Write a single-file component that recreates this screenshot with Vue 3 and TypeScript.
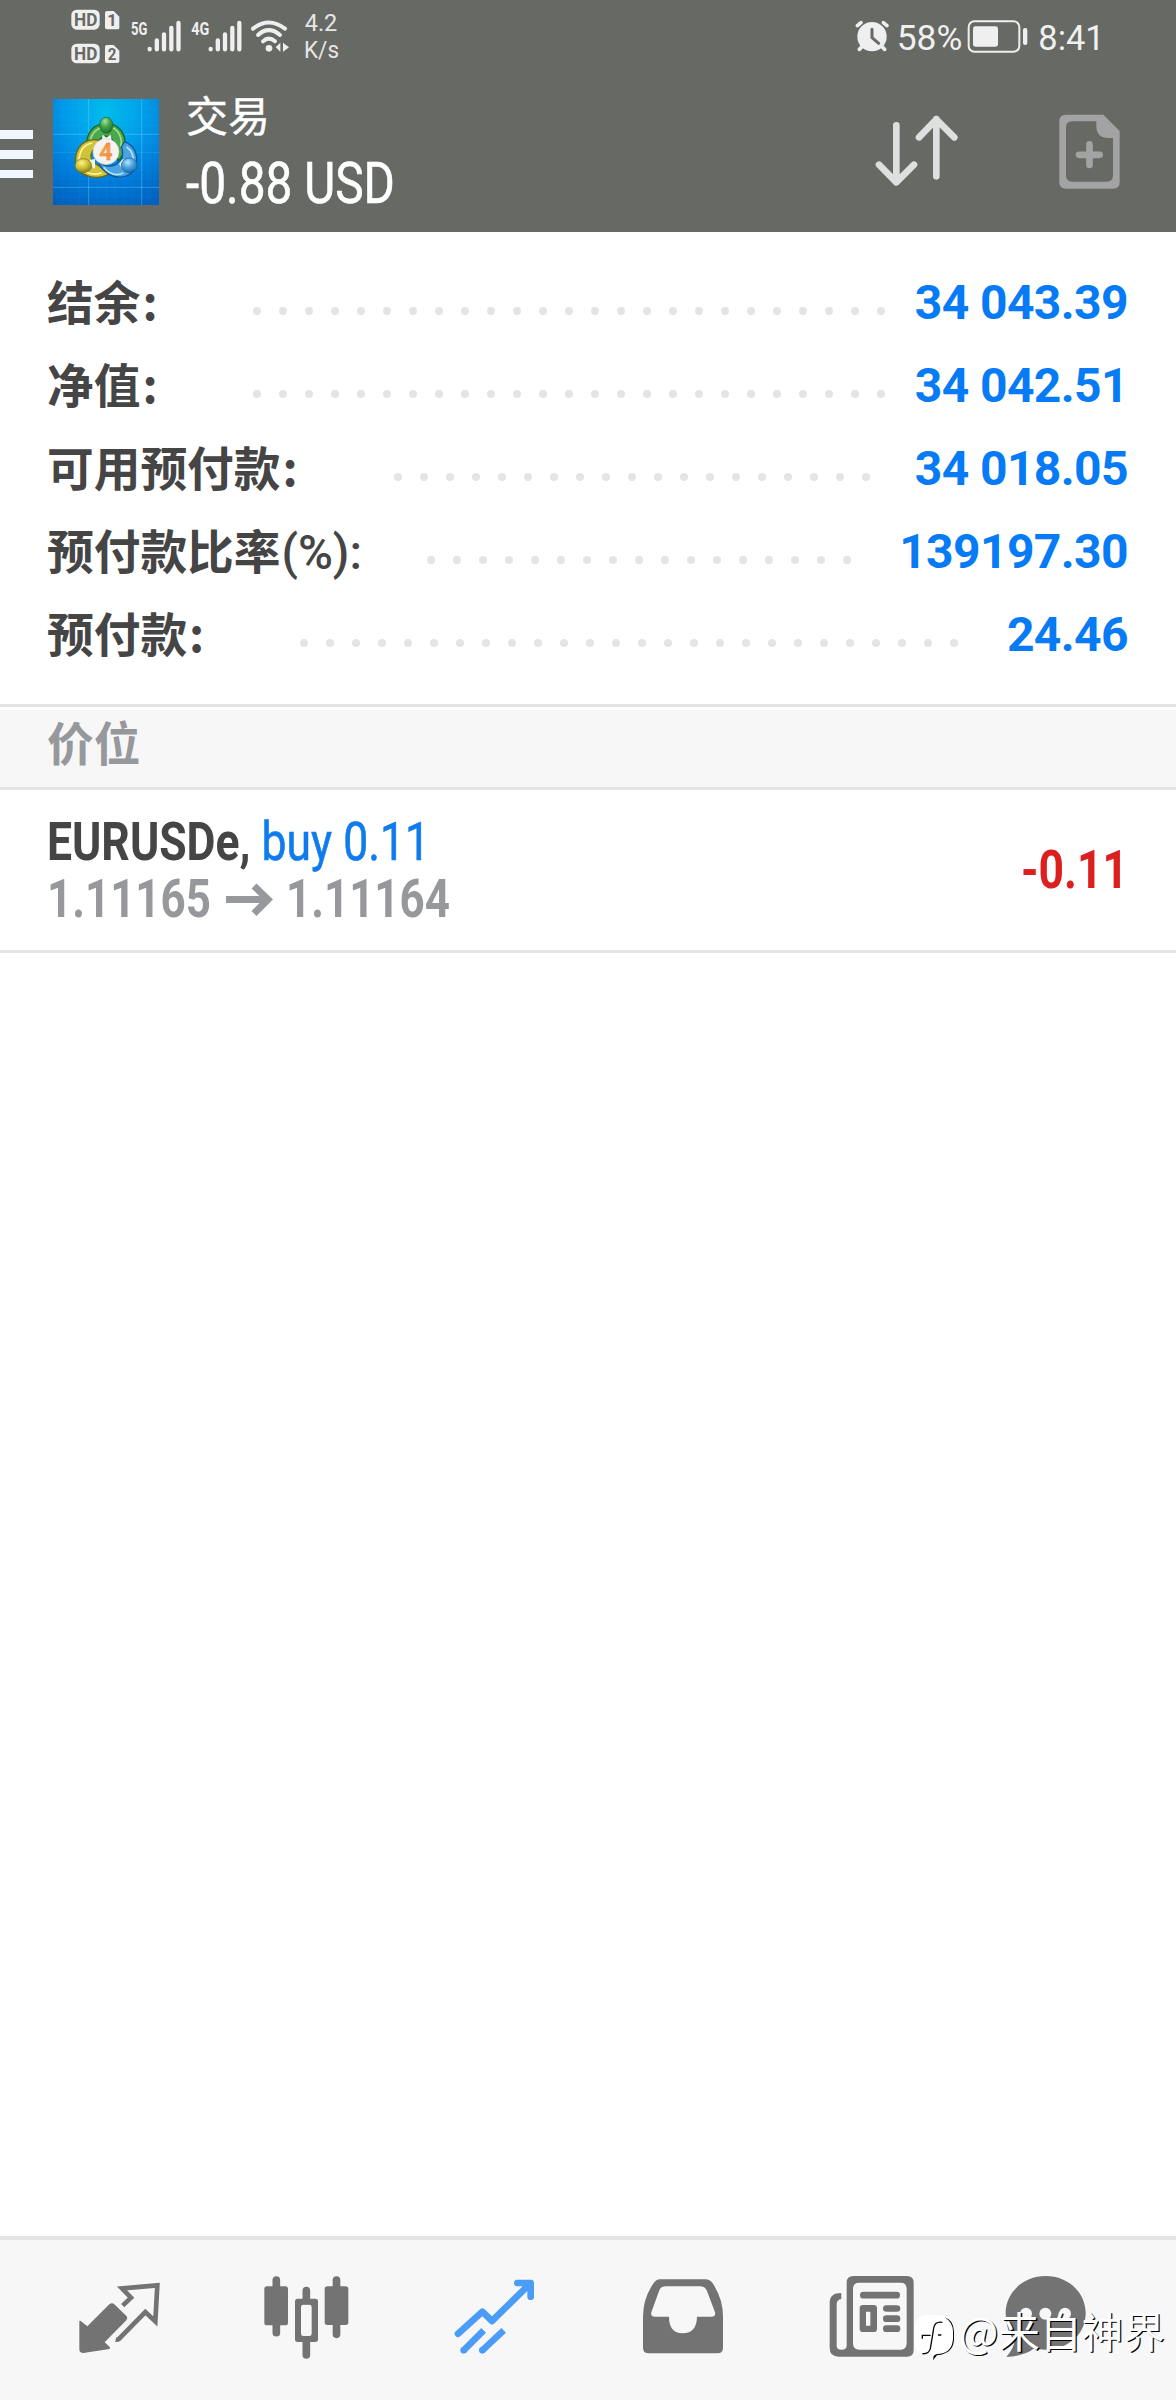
<script setup lang="ts">
interface SummaryRow {
  label: string
  suffix: string
  latin?: boolean
  value: string
  labelWidth: number
  dots: number
}

const rows: SummaryRow[] = [
  { label: '结余', suffix: ':', value: '34 043.39', labelWidth: 205.5, dots: 25 },
  { label: '净值', suffix: ':', value: '34 042.51', labelWidth: 205.5, dots: 25 },
  { label: '可用预付款', suffix: ':', value: '34 018.05', labelWidth: 347, dots: 19 },
  { label: '预付款比率', suffix: '(%):', latin: true, value: '139197.30', labelWidth: 380, dots: 17 },
  { label: '预付款', suffix: ':', value: '24.46', labelWidth: 253, dots: 26 },
]
</script>

<template>
  <div class="screen">
    <header class="header">
      <div class="status">
        <svg class="status-left" width="400" height="72" viewBox="0 0 1200 216">
          <g fill="#efefef">
            <rect x="214" y="29" width="85" height="60" rx="16" />
            <rect x="214" y="131" width="85" height="59" rx="16" />
            <path d="M321 33h20l17 17v33q0 5-6 5h-31q-6 0-6-6V39q0-6 6-6z" />
            <path d="M321 135h20l17 17v32q0 5-6 5h-31q-6 0-6-6v-42q0-6 6-6z" />
          </g>
          <g class="bold" fill="#676965" font-size="54">
            <text x="222" y="78" textLength="70" lengthAdjust="spacingAndGlyphs">HD</text>
            <text x="222" y="180" textLength="70" lengthAdjust="spacingAndGlyphs">HD</text>
            <text x="322" y="79" font-size="50">1</text>
            <text x="323" y="180" font-size="48" textLength="26" lengthAdjust="spacingAndGlyphs">2</text>
          </g>
          <g class="bold" fill="#efefef" font-size="57">
            <text x="393" y="104" textLength="49" lengthAdjust="spacingAndGlyphs">5G</text>
            <text x="574" y="105" textLength="54" lengthAdjust="spacingAndGlyphs">4G</text>
          </g>
          <g stroke="#efefef" stroke-width="13" stroke-linecap="round">
            <path d="M449 147v1M470.500 121v27M492 103v45M514 84v64M535.500 69v79" />
            <path d="M632 147v1M653.500 121v27M675 103v45M697 84v64M718 69v79" />
          </g>
          <g fill="none" stroke="#efefef" stroke-width="12" stroke-linecap="round">
            <path d="M759 86Q806 49 855 86" />
            <path d="M774 105Q806 76 840 105" />
            <path d="M789 124Q806 108 825 124" />
          </g>
          <circle cx="807" cy="145" r="10" fill="#efefef" />
          <path d="M841 128v27l-14-13zM849 128v27l18-13z" fill="#efefef" />
          <g class="regular" fill="#e6e6e6" font-size="70">
            <text x="914" y="94" textLength="98" lengthAdjust="spacingAndGlyphs">4.2</text>
            <text x="912" y="174" textLength="105" lengthAdjust="spacingAndGlyphs">K/s</text>
          </g>
        </svg>
        <svg class="status-right" width="356" height="72" viewBox="0 0 1068 216">
          <circle cx="156" cy="110" r="44" fill="#efefef" />
          <path d="M112 77l11-9M201 77l-11-9M125 141l-7 7M187 141l7 7" stroke="#efefef" stroke-width="11" stroke-linecap="round" />
          <path d="M156 88v25l20 17" fill="none" stroke="#676965" stroke-width="9" stroke-linecap="round" />
          <g class="regular" fill="#f0f0f0" font-size="104">
            <text x="230" y="150" textLength="197" lengthAdjust="spacingAndGlyphs">58%</text>
            <text x="655" y="150" textLength="199" lengthAdjust="spacingAndGlyphs">8:41</text>
          </g>
          <rect x="446" y="64" width="152" height="91" rx="17" fill="none" stroke="#efefef" stroke-width="6" />
          <rect x="459" y="79" width="75" height="61" rx="7" fill="#efefef" />
          <rect x="609" y="84" width="13" height="51" rx="6" fill="#efefef" />
        </svg>
      </div>
      <div class="toolbar">
        <svg class="burger" width="33" height="50" viewBox="0 0 33 50">
          <path d="M0 0h33v9H0zM0 20h33v9H0zM0 40h33v8H0z" fill="#f0f7ff" />
        </svg>
        <svg class="logo" width="106" height="106" viewBox="39 27 318 318">
          <defs>
            <radialGradient id="sky" cx=".5" cy=".12" r=".95">
              <stop offset="0" stop-color="#00bdec" />
              <stop offset=".35" stop-color="#00a0eb" />
              <stop offset=".7" stop-color="#007bd9" />
              <stop offset="1" stop-color="#0062c0" />
            </radialGradient>
            <radialGradient id="green" cx=".4" cy=".25" r=".8">
              <stop offset="0" stop-color="#a5e295" /><stop offset=".45" stop-color="#43a447" /><stop offset="1" stop-color="#176d2c" />
            </radialGradient>
            <radialGradient id="yellow" cx=".4" cy=".3" r=".8">
              <stop offset="0" stop-color="#fff28a" /><stop offset=".5" stop-color="#c9bd32" /><stop offset="1" stop-color="#786f18" />
            </radialGradient>
            <radialGradient id="blue" cx=".4" cy=".3" r=".8">
              <stop offset="0" stop-color="#b5e6ff" /><stop offset=".45" stop-color="#4ba2dd" /><stop offset="1" stop-color="#125b9f" />
            </radialGradient>
          </defs>
          <rect x="39" y="27" width="318" height="318" fill="url(#sky)" />
          <path d="M66 27v318M92 27v318M119 27v318M172 27v318M199 27v318M225 27v318M252 27v318M278 27v318M330 27v318M39 54h318M39 80h318M39 107h318M39 160h318M39 213h318M39 240h318M39 266h318M39 319h318" stroke="#8de0ff" stroke-opacity=".08" stroke-width="2" />
          <path d="M146 27v318M305 27v318M39 133h318M39 292h318" stroke="#9be4ff" stroke-opacity=".32" stroke-width="3" />
          <path d="M39 187h318" stroke="#9be4ff" stroke-opacity=".15" stroke-width="3" />
          <g stroke-linejoin="round" stroke-width="4">
            <path d="M140 171C136 129 161 101 199 101C237 101 259 132 255 170C252 190 245 205 234 212L218 151Q200 126 177 151z" fill="#48a84b" stroke="#176328" />
            <path d="M150 157C154 128 173 112 195 112M214 112C237 120 248 145 242 170" fill="none" stroke="#a3db8c" stroke-width="5" />
            <path d="M108 234C101 187 117 152 162 149Q177 148 182 160L157 183Q144 207 168 222L209 250Q185 267 150 260Q124 253 108 234z" fill="#cfc33a" stroke="#6b671a" />
            <path d="M117 211C119 181 133 163 157 159M131 242Q154 258 186 249" fill="none" stroke="#fff49a" stroke-width="5" />
            <path d="M254 155C283 167 294 190 289 225C280 255 249 268 218 258C192 247 178 229 177 216Q200 236 227 224L246 207Q251 184 244 171z" fill="#4ba4df" stroke="#0f579a" />
            <path d="M260 171Q283 188 280 218M191 232Q217 264 250 249" fill="none" stroke="#b0e4ff" stroke-width="5" />
          </g>
          <path d="M188 134l11 9 13-9 3 18h-30zM149 210l16-3v29l-19-10zM237 222l11-15 10 7-11 23z" fill="#f4f6ed" />
          <ellipse cx="199" cy="106" rx="20" ry="24" fill="url(#green)" stroke="#17662b" stroke-width="2" />
          <ellipse cx="130" cy="227" rx="25" ry="21" fill="url(#yellow)" stroke="#756d20" stroke-width="2" />
          <ellipse cx="268" cy="226" rx="24" ry="22" fill="url(#blue)" stroke="#14599a" stroke-width="2" />
          <circle cx="198" cy="185" r="39" fill="#f5f2f0" stroke="#c9cdcd" stroke-width="2" />
          <text class="bold" x="178" y="210" font-size="72" fill="#f6a04d" stroke="#d97a2b" stroke-width="1" textLength="40" lengthAdjust="spacingAndGlyphs">4</text>
        </svg>
        <svg class="account" width="300" height="130" viewBox="0 0 300 130">
          <text class="cjk title" x="-1" y="41.500" font-size="42">交易</text>
          <text class="regular" x="-1" y="113" font-size="56.500" fill="#fff" stroke="#fff" stroke-width=".6" textLength="209" lengthAdjust="spacingAndGlyphs">-0.88 USD</text>
        </svg>
        <svg class="actions" width="356" height="145" viewBox="0 261 1068 435">
          <path d="M229 376v171M177 494l52 53 53-53M349 529V357M297 412l52-54 54 54" fill="none" stroke="#dfdfdf" stroke-width="20" stroke-linecap="round" stroke-linejoin="round" />
          <path fill-rule="evenodd" d="M738 344H850L899 393V547Q899 566 879 566H738Q718 566 718 547V364Q718 344 738 344zM757 364Q738 364 738 383V526Q738 545 757 545H861Q879 545 879 526V414H861Q829 411 829 381V364z" fill="#a3a3a3" />
          <path d="M777 464.500h62M808.500 433v62" stroke="#a3a3a3" stroke-width="20" stroke-linecap="round" />
        </svg>
      </div>
    </header>

    <section class="summary">
      <div v-for="row in rows" :key="row.value" class="row">
        <div class="label" :style="{ width: row.labelWidth + 'px' }">{{ row.label }}<span :class="row.latin ? 'latin' : 'colon'">{{ row.suffix }}</span></div>
        <div class="leader"><i v-for="n in row.dots" :key="n" /></div>
        <div class="value">{{ row.value }}</div>
      </div>
    </section>

    <div class="section-title">价位</div>

    <section class="position">
      <svg width="520" height="160" viewBox="0 0 520 160">
        <text x="-1" y="70" font-size="53.500" textLength="383" lengthAdjust="spacingAndGlyphs"><tspan class="bold" fill="#454545">EURUSDe, </tspan><tspan class="regular" fill="#0f7bee" stroke="#0f7bee" stroke-width=".6">buy 0.11</tspan></text>
        <g class="bold" fill="#97989c" font-size="53.500">
          <text x="-1" y="127" textLength="164" lengthAdjust="spacingAndGlyphs">1.11165</text>
          <text x="238" y="127" textLength="164" lengthAdjust="spacingAndGlyphs">1.11164</text>
        </g>
        <path d="M178 109.500h43M206 96l14 13.500-14 14" fill="none" stroke="#97989c" stroke-width="7" />
      </svg>
      <svg width="110" height="160" viewBox="0 0 110 160">
        <text class="bold" x="3" y="98" font-size="53.500" fill="#dc2020" textLength="107" lengthAdjust="spacingAndGlyphs">-0.11</text>
      </svg>
    </section>

    <main class="blank"></main>

    <nav class="nav">
      <svg viewBox="-48 60 564 480">
        <path d="M118 303q3-2 7 2l17 14 66-66q8-7 15 0l37 36q5 6-1 12l-65 66 15 14q4 6-5 7l-74 11q-12 0-12-12z" fill="#737373" />
        <path d="M248 257l25-24-27-28 106-9-6 108-30-28-79 81q-5 3-10 2" fill="none" stroke="#737373" stroke-width="14" stroke-linejoin="miter" />
      </svg>
      <svg viewBox="516 60 564 480">
        <path d="M709 180v158M889.500 180v163M799 212v30M799 360v45" stroke="#737373" stroke-width="23" stroke-linecap="round" />
        <rect x="673" y="199" width="71" height="117" rx="8" fill="#737373" />
        <rect x="854" y="199" width="71" height="116" rx="8" fill="#737373" />
        <path fill-rule="evenodd" d="M773 236h53q8 0 8 8v114q0 8-8 8h-53q-8 0-8-8V244q0-8 8-8zM790 254q-7 0-7 7v80q0 7 7 7h18q7 0 7-7v-80q0-7-7-7z" fill="#737373" />
      </svg>
      <svg viewBox="-60 60 564 480">
        <g fill="none" stroke="#4a9cf6" stroke-width="20">
          <path d="M114 341l73-66 29 28L328 193" stroke-linecap="round" stroke-linejoin="round" />
          <path d="M292 189h40v41" stroke-linecap="round" stroke-linejoin="round" />
          <path d="M131 391l60-60M187 391l64-60" />
        </g>
        <path d="M315 183h20v20l-10 14-18-18z" fill="#4a9cf6" />
        <circle cx="131" cy="391" r="10" fill="#4a9cf6" />
        <circle cx="187" cy="391" r="10" fill="#4a9cf6" />
      </svg>
      <svg viewBox="504 60 564 480">
        <path fill-rule="evenodd" d="M721 178H856q14 0 22 12 31 46 31 100v93q0 17-17 17H686q-17 0-17-17v-93q0-54 30-98 8-14 22-14zM736 199q-13 0-18 12l-24 66q-3 13 11 13h42q0 49 41 50 42-1 43-50h43q14 0 11-13l-24-64q-5-14-20-14z" fill="#737373" />
      </svg>
      <svg viewBox="-12 60 564 480">
        <path fill-rule="evenodd" d="M220 168H381q20 0 20 20V390q0 20-20 20H176q-27 0-27-26V248q0-29 35-29v18q-14 2-14 16v124q0 12 14 12 16 0 16-12V188q0-20 20-20zM238 188q-19 0-19 19v163q0 19 19 19h124q18 0 18-19V207q0-19-18-19z" fill="#737373" />
        <path d="M250 225.500h100M319 265.500h32M319 296h32M319 326h32" stroke="#737373" stroke-width="20" stroke-linecap="round" />
        <path fill-rule="evenodd" d="M249 255h32q10 0 10 10v61q0 10-10 10h-32q-10 0-10-10v-61q0-10 10-10zM258 275v42h13v-42z" fill="#737373" />
      </svg>
      <svg viewBox="552 60 564 480">
        <path d="M797 168C864 168 917 217 917 280S864 389 797 389Q779 389 763 385Q734 408 679 411Q699 389 704 364Q677 331 677 280C677 217 730 168 797 168z" fill="#737373" />
        <circle cx="738" cy="281" r="18" fill="#f7f7f7" /><circle cx="796" cy="281" r="18" fill="#f7f7f7" /><circle cx="855" cy="281" r="18" fill="#f7f7f7" />
      </svg>
      <div class="watermark">
        <svg class="mark-logo" viewBox="384 270 156 165">
          <path d="M443 285H478Q521 285 521 329V360Q521 399 484 403H477L461 420V404H440Q403 404 403 360V329Q403 285 443 285z" fill="#fff" />
          <path d="M494 292Q521 300 522 335V358Q521 396 483 404L471 406L459 421L461 407Q467 401 480 401Q516 397 519 356V333Q518 307 494 292z" fill="#0a0a0a" />
          <path d="M487 307q-22-4-26 17l-3 20-7 42q-5 17-24 15M427 356v-10h25M474 345h10" fill="none" stroke="#0a0a0a" stroke-width="4" />
        </svg>
        <span class="mark-text">@来自神界</span>
      </div>
    </nav>
  </div>
</template>

<style>
body {
  margin: 0;
  background: #fff;
}
</style>

<style scoped>
.screen {
  display: flex;
  flex-direction: column;
  width: 1176px;
  height: 2400px;
  overflow: hidden;
  background: #fff;
  font-family: Roboto, "Noto Sans CJK SC", sans-serif;
}
svg {
  display: block;
  flex: none;
  overflow: visible;
}
.bold {
  font-family: Roboto, sans-serif;
  font-weight: 700;
}
.regular {
  font-family: Roboto, sans-serif;
  font-weight: 400;
}
.cjk {
  font-family: "Noto Sans CJK SC", sans-serif;
}
.title {
  fill: #fff;
  stroke: #fff;
  stroke-width: 0.4px;
  font-weight: 400;
}
.header {
  height: 232px;
  background: #676965;
}
.status {
  display: flex;
  justify-content: space-between;
  height: 72px;
}
.toolbar {
  display: flex;
  height: 160px;
}
.burger {
  margin-top: 58px;
}
.logo {
  margin: 27px 0 0 20px;
}
.account {
  margin: 18px 0 0 28px;
}
.actions {
  margin: 15px 0 0 auto;
}
.summary {
  box-sizing: border-box;
  height: 475px;
  padding: 29px 48px 0 47px;
  border-bottom: 3px solid #e4e4e4;
}
.row {
  display: flex;
  align-items: center;
  height: 83px;
}
.label {
  flex: none;
  height: 83px;
  margin-top: -6px;
  color: #454545;
  font: 700 46.7px/83px "Noto Sans CJK SC", sans-serif;
  white-space: nowrap;
}
.colon {
  margin-left: 2px;
}
.latin {
  margin-left: 1px;
  font-family: Roboto, sans-serif;
  font-size: 47.5px;
  font-weight: 500;
}
.leader {
  display: flex;
  gap: 18px;
  padding-top: 17px;
}
.leader i {
  width: 8px;
  height: 8px;
  border-radius: 50%;
  background: #e4e4e4;
}
.value {
  margin-left: auto;
  color: #067bf5;
  font-size: 48px;
  font-weight: 700;
  letter-spacing: -0.6px;
}
.section-title {
  height: 77px;
  margin-top: 3px;
  padding-left: 47px;
  border-bottom: 3px solid #e4e4e4;
  background: #f7f7f7;
  color: #97989c;
  font: 700 46.7px/62px "Noto Sans CJK SC", sans-serif;
}
.position {
  display: flex;
  justify-content: space-between;
  height: 160px;
  padding: 0 48px;
  border-bottom: 3px solid #e4e4e4;
}
.blank {
  flex: 1;
}
.nav {
  position: relative;
  box-sizing: border-box;
  display: flex;
  height: 164px;
  padding: 0 24px;
  border-top: 4px solid #e4e4e4;
  background: #f7f7f7;
}
.nav svg {
  width: 188px;
  height: 160px;
}
.watermark {
  position: absolute;
  top: 70px;
  left: 908px;
  display: flex;
  align-items: flex-start;
}
.nav .mark-logo {
  width: 52px;
  height: 55px;
}
.mark-text {
  margin: -7px 0 0 -1px;
  color: #fff;
  font: 400 41.6px/55px "Noto Sans CJK SC", sans-serif;
  text-shadow: 1.3px 1.3px 0 #000;
  white-space: nowrap;
}
</style>
